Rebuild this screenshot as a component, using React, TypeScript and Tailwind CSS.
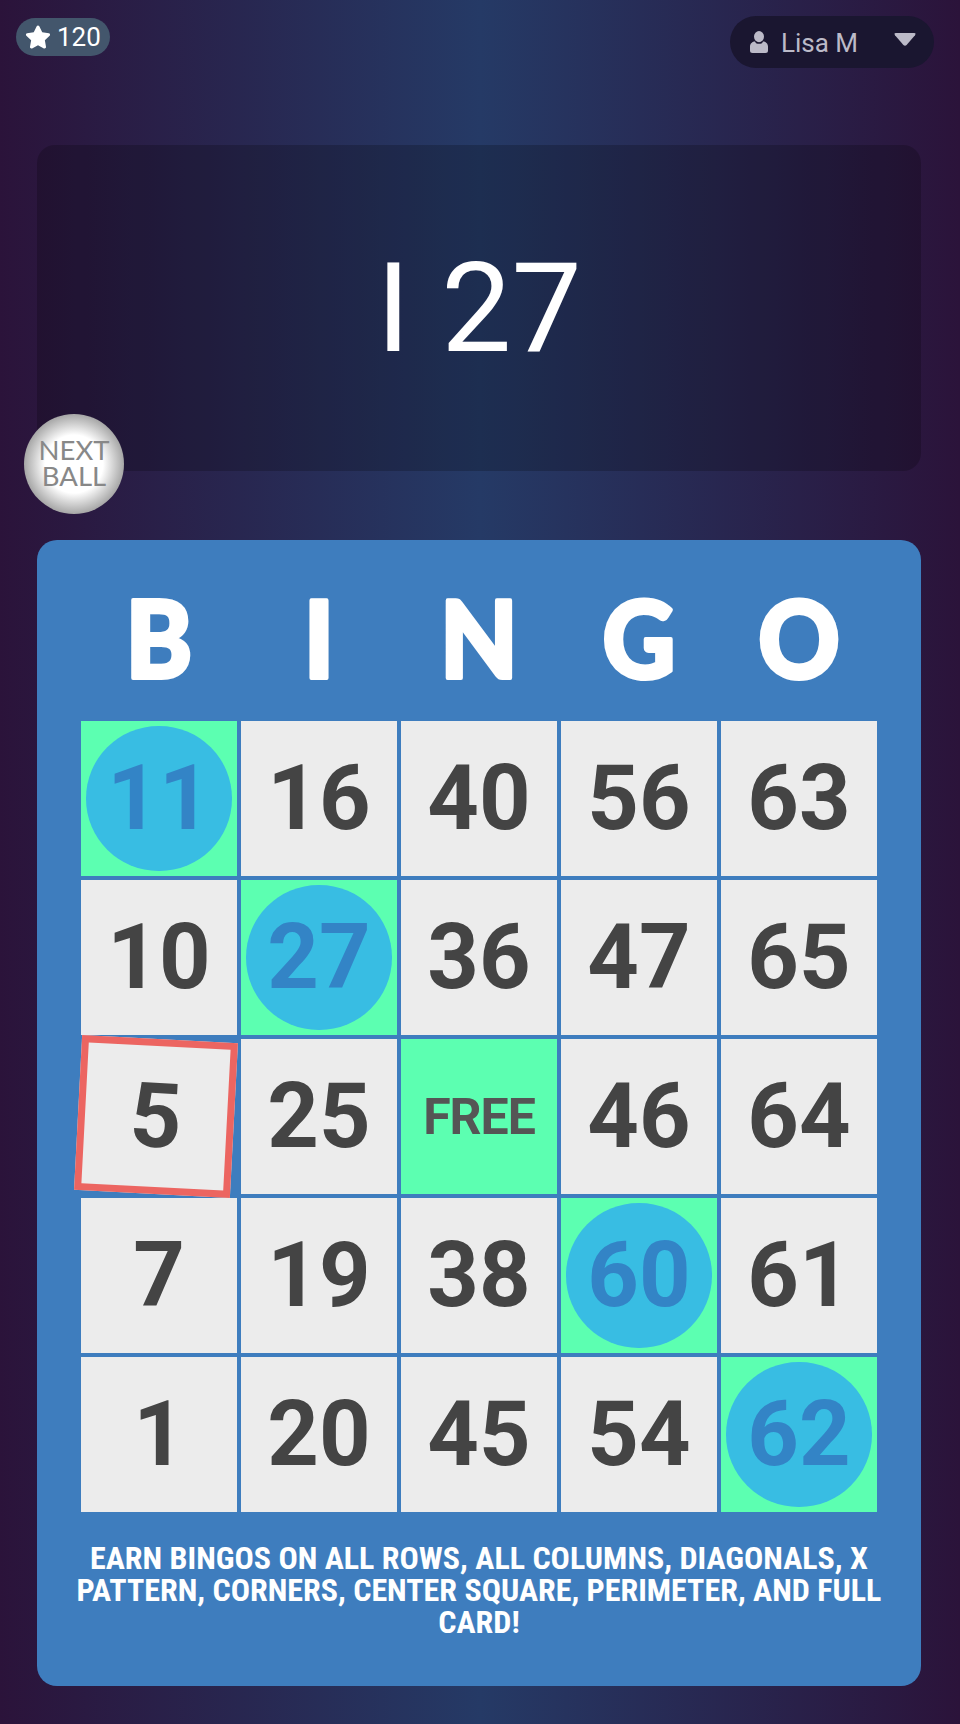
import React from "react";
import { FaStar } from "react-icons/fa";

const rows: (number | string)[][] = [
  [11, 16, 40, 56, 63],
  [10, 27, 36, 47, 65],
  [5, 25, "FREE", 46, 64],
  [7, 19, 38, 60, 61],
  [1, 20, 45, 54, 62],
];
const marked = new Set<number | string>([11, 27, 60, 62]);

function Letter({ ch }: { ch: string }) {
  return (
    <svg width="156" height="165" viewBox="0 0 156 165" aria-label={ch}>
      <text
        transform="translate(78 122) scale(.95 1)"
        textAnchor="middle"
        fill="#fff"
        stroke="#fff"
        strokeWidth="4"
        strokeLinejoin="round"
        fontFamily="Lato, sans-serif"
        fontWeight="900"
        fontSize="106"
      >
        {ch}
      </text>
    </svg>
  );
}

function Cell({ v }: { v: number | string }) {
  if (v === "FREE") {
    return (
      <div className="flex h-[155px] items-center justify-center bg-[#5cffb1] text-[50px] font-bold leading-none tracking-[-1px] text-[#555]">
        FREE
      </div>
    );
  }
  if (v === 5) {
    return (
      <div className="flex h-[155px] -translate-x-[3px] rotate-[3deg] items-center justify-center border-[7px] border-[#ec6561] bg-[#ececec] text-[90px] font-bold leading-none text-[#444]">
        {v}
      </div>
    );
  }
  if (marked.has(v)) {
    return (
      <div className="relative flex h-[155px] items-center justify-center bg-[#5cffb1] text-[90px] font-bold leading-none text-[#444]">
        {v}
        <div className="absolute inset-[5px] flex items-center justify-center rounded-full bg-[#38bde3] text-[#3384c6]">
          {v}
        </div>
      </div>
    );
  }
  return (
    <div className="flex h-[155px] items-center justify-center bg-[#ececec] text-[90px] font-bold leading-none text-[#444]">
      {v}
    </div>
  );
}

export default function App() {
  return (
    <div className="relative min-h-[1724px] w-[960px] bg-[linear-gradient(90deg,#2b133a_0%,#253a66_50%,#2b133a_100%)] font-['Roboto',sans-serif]">
      <div className="flex h-[145px] items-start justify-between pl-4 pr-[26px]">
        <div className="mt-[18px] flex h-[38px] w-[94px] items-center gap-[6px] rounded-full bg-[#43566c] pl-[9px] text-[26px] font-normal leading-none text-white">
          <FaStar className="h-[26px] w-[26px] shrink-0" />
          <span>120</span>
        </div>
        <div className="mt-4 flex h-[52px] w-[204px] items-center rounded-full bg-[#1a1630] pl-[20px] text-[26px] font-normal leading-none text-[#bcbac8]">
          <svg width="18" height="22" viewBox="0 0 18 22" fill="#bcbac8" className="shrink-0">
            <ellipse cx="9" cy="5.6" rx="5" ry="5.6" />
            <path d="M0 15.5C0 12.5 2.5 10.5 5 10.5L6 12.2Q9 13.2 12 12.2L13 10.5C15.5 10.5 18 12.5 18 15.5V19.5Q18 22 15.5 22H2.5Q0 22 0 19.5Z" />
          </svg>
          <span className="ml-[13px] mt-[2px]">Lisa M</span>
          <svg width="22" height="13" viewBox="0 0 22 13" fill="#bcbac8" className="ml-[36px] mt-[-6px] shrink-0">
            <path d="M2 0H20Q22.5 0 21 2.2L12.6 12Q11 13.4 9.4 12L1 2.2Q-0.5 0 2 0Z" />
          </svg>
        </div>
      </div>

      <div className="ml-[37px] mr-[39px] flex h-[326px] items-center justify-center rounded-[18px] bg-black/20 text-[125px] font-normal leading-none text-white">
        <span className="whitespace-pre">I 27</span>
      </div>

      <div className="absolute left-6 top-[414px] flex h-[100px] w-[100px] flex-col items-center justify-center rounded-full bg-[radial-gradient(closest-side,#ffffff_58%,#a6a6a6_100%)] pb-[2px] font-['Lato',sans-serif] text-[27.5px] leading-[26px] text-[#888]">
        <span>NEXT</span>
        <span>BALL</span>
      </div>

      <div className="ml-[37px] mr-[39px] mt-[69px] h-[1146px] rounded-[20px] bg-[#3e7dbe] px-[44px] pt-[16px]">
        <div className="grid h-[165px] grid-cols-5 gap-x-1">
          {"BINGO".split("").map((c) => (
            <Letter key={c} ch={c} />
          ))}
        </div>
        <div className="grid grid-cols-5 gap-1">
          {rows.flat().map((v) => (
            <Cell key={String(v)} v={v} />
          ))}
        </div>
        <p className="mx-[-8px] mt-[30px] text-center text-[32px] font-bold uppercase leading-[32px] text-white [font-stretch:75%]">
          Earn bingos on all rows, all columns, diagonals, X pattern, corners, center square, perimeter, and full card!
        </p>
      </div>
    </div>
  );
}
